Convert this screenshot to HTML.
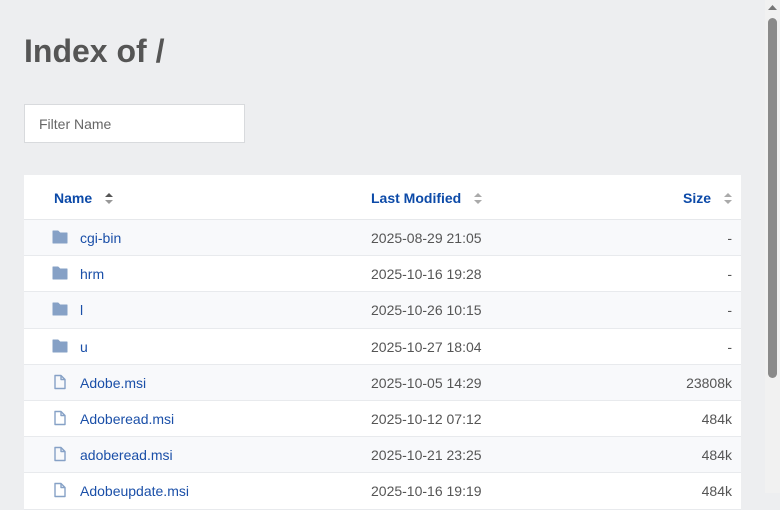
<!DOCTYPE html>
<html><head><style>
html,body{margin:0;padding:0}
body{width:780px;height:493px;overflow:hidden;background:#edeef0;font-family:"Liberation Sans",sans-serif;position:relative}
h1{position:absolute;left:24px;top:33px;margin:0;font-size:32px;font-weight:bold;color:#555}
.filter{position:absolute;left:24px;top:104px;width:219px;height:37px;border:1px solid #d8dadd;background:#fff;box-sizing:content-box}
.filter span{position:absolute;left:14px;top:11px;font-size:14px;color:#666}
.tbl{position:absolute;left:24px;top:175px;width:717px;background:#fff}
.hdr{height:44px;border-bottom:1px solid #e6e8eb;position:relative;font-weight:bold;color:#0c4aa8;font-size:14px}
.row{height:35.2px;border-bottom:1px solid #e8eaed;position:relative;font-size:14px}
.row:nth-child(odd){background:#f8f9fb}
.a{position:absolute;top:10px}
.n{left:56px;color:#1a4fa8}
.d{left:347px;color:#555}
.s{right:9px;color:#555}
.ic{position:absolute;left:28px;top:10px}
.sort{position:absolute;width:8px;height:11px}
.sb{position:absolute;left:765px;top:0;width:15px;height:493px;background:#f1f1f1}
.th{position:absolute;left:3px;top:18px;width:9px;height:360px;background:#8a8a8a;border-radius:5px}
</style></head><body>
<h1>Index of /</h1>
<div class="filter"><span>Filter Name</span></div>
<div class="tbl">
<div class="hdr">
<span class="a" style="left:30px;top:15px">Name</span>
<svg class="sort" style="left:81px;top:18px" viewBox="0 0 8 11"><path d="M0 4L4 0L8 4Z" fill="#555"/><path d="M0 7L4 11L8 7Z" fill="#999"/></svg>
<span class="a" style="left:347px;top:15px">Last Modified</span>
<svg class="sort" style="left:450px;top:18px" viewBox="0 0 8 11"><path d="M0 4L4 0L8 4Z" fill="#aaa"/><path d="M0 7L4 11L8 7Z" fill="#aaa"/></svg>
<span class="a" style="left:659px;top:15px">Size</span>
<svg class="sort" style="left:700px;top:18px" viewBox="0 0 8 11"><path d="M0 4L4 0L8 4Z" fill="#aaa"/><path d="M0 7L4 11L8 7Z" fill="#aaa"/></svg>
</div>
<div class="rows">
<div class="row"><svg class="ic" width="16" height="14" viewBox="0 0 16 14"><path d="M1 1h5l2 2h7v10H1z" fill="#86a1c6" stroke="#86a1c6" stroke-linejoin="round"/></svg><span class="a n">cgi-bin</span><span class="a d">2025-08-29 21:05</span><span class="a s">-</span></div>
<div class="row"><svg class="ic" width="16" height="14" viewBox="0 0 16 14"><path d="M1 1h5l2 2h7v10H1z" fill="#86a1c6" stroke="#86a1c6" stroke-linejoin="round"/></svg><span class="a n">hrm</span><span class="a d">2025-10-16 19:28</span><span class="a s">-</span></div>
<div class="row"><svg class="ic" width="16" height="14" viewBox="0 0 16 14"><path d="M1 1h5l2 2h7v10H1z" fill="#86a1c6" stroke="#86a1c6" stroke-linejoin="round"/></svg><span class="a n">l</span><span class="a d">2025-10-26 10:15</span><span class="a s">-</span></div>
<div class="row"><svg class="ic" width="16" height="14" viewBox="0 0 16 14"><path d="M1 1h5l2 2h7v10H1z" fill="#86a1c6" stroke="#86a1c6" stroke-linejoin="round"/></svg><span class="a n">u</span><span class="a d">2025-10-27 18:04</span><span class="a s">-</span></div>
<div class="row"><svg class="ic" width="16" height="16" viewBox="0 0 16 16" style="top:9px"><path d="M3 1.5h6l4 4v9H3z M9 1.5v4h4" fill="none" stroke="#86a1c6" stroke-width="1.4" stroke-linejoin="round"/></svg><span class="a n">Adobe.msi</span><span class="a d">2025-10-05 14:29</span><span class="a s">23808k</span></div>
<div class="row"><svg class="ic" width="16" height="16" viewBox="0 0 16 16" style="top:9px"><path d="M3 1.5h6l4 4v9H3z M9 1.5v4h4" fill="none" stroke="#86a1c6" stroke-width="1.4" stroke-linejoin="round"/></svg><span class="a n">Adoberead.msi</span><span class="a d">2025-10-12 07:12</span><span class="a s">484k</span></div>
<div class="row"><svg class="ic" width="16" height="16" viewBox="0 0 16 16" style="top:9px"><path d="M3 1.5h6l4 4v9H3z M9 1.5v4h4" fill="none" stroke="#86a1c6" stroke-width="1.4" stroke-linejoin="round"/></svg><span class="a n">adoberead.msi</span><span class="a d">2025-10-21 23:25</span><span class="a s">484k</span></div>
<div class="row"><svg class="ic" width="16" height="16" viewBox="0 0 16 16" style="top:9px"><path d="M3 1.5h6l4 4v9H3z M9 1.5v4h4" fill="none" stroke="#86a1c6" stroke-width="1.4" stroke-linejoin="round"/></svg><span class="a n">Adobeupdate.msi</span><span class="a d">2025-10-16 19:19</span><span class="a s">484k</span></div>
</div>
</div>
<div class="sb"><svg style="position:absolute;left:3px;top:5px" width="9" height="6" viewBox="0 0 9 6"><path d="M0 5L4.5 0L9 5Z" fill="#777"/></svg><div class="th"></div></div>
</body></html>
